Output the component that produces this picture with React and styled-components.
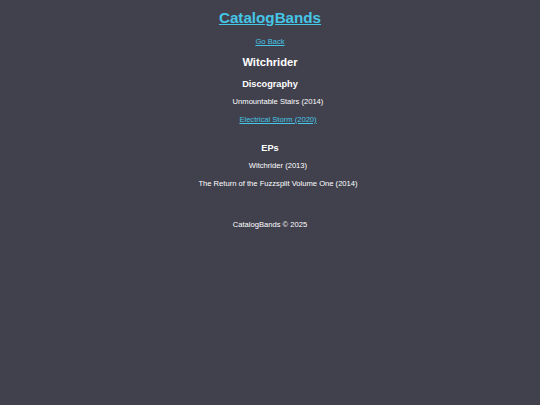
import React from 'react'
import styled, { createGlobalStyle } from 'styled-components'

const Global = createGlobalStyle`
  html, body {
    margin: 0;
    padding: 0;
    background: #41414e;
    font-family: "Liberation Sans", Arial, sans-serif;
    color: #ffffff;
  }
`

const Page = styled.div`
  min-height: 405px;
  display: flex;
  flex-direction: column;
  align-items: center;
  text-align: center;
`

const Header = styled.header`
  display: flex;
  flex-direction: column;
  align-items: center;
  padding-top: 8px;
`

const Brand = styled.a`
  font-size: 15.2px;
  font-weight: bold;
  color: #45c6e6;
  text-decoration: underline;
  line-height: 20px;
`

const BackLink = styled.a`
  margin-top: 9px;
  font-size: 7.6px;
  color: #45c6e6;
  text-decoration: underline;
  line-height: 10px;
`

const BandName = styled.h1`
  margin: 8px 0 0;
  font-size: 11.2px;
  line-height: 14px;
  font-weight: bold;
`

const Section = styled.section`
  display: flex;
  flex-direction: column;
  align-items: center;
  margin-top: ${p => p.$top}px;
`

const SectionTitle = styled.h2`
  margin: 0;
  font-size: 9.2px;
  line-height: 12px;
  font-weight: bold;
`

const List = styled.ul`
  list-style: none;
  margin: 0;
  padding: 0 0 0 16px;
  display: flex;
  flex-direction: column;
  align-items: center;
  gap: 8px;
  margin-top: 7px;
`

const Item = styled.li`
  font-size: 7.6px;
  line-height: 10px;
  color: ${p => (p.$link ? '#45c6e6' : '#ffffff')};
  text-decoration: ${p => (p.$link ? 'underline' : 'none')};
`

const Footer = styled.footer`
  margin-top: 31px;
  font-size: 7.6px;
  line-height: 10px;
`

export default function App() {
  return (
    <>
      <Global />
      <Page>
        <Header>
          <Brand href="#">CatalogBands</Brand>
          <BackLink href="#">Go Back</BackLink>
        </Header>
        <BandName>Witchrider</BandName>
        <Section $top={9}>
          <SectionTitle>Discography</SectionTitle>
          <List>
            <Item>Unmountable Stairs (2014)</Item>
            <Item $link>Electrical Storm (2020)</Item>
          </List>
        </Section>
        <Section $top={17}>
          <SectionTitle>EPs</SectionTitle>
          <List>
            <Item>Witchrider (2013)</Item>
            <Item>The Return of the Fuzzsplit Volume One (2014)</Item>
          </List>
        </Section>
        <Footer>CatalogBands © 2025</Footer>
      </Page>
    </>
  )
}
